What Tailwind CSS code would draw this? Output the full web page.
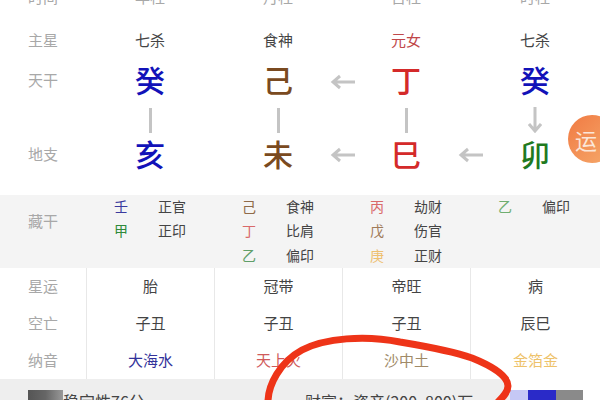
<!DOCTYPE html>
<html lang="zh">
<head>
<meta charset="UTF-8">
<title>排盘</title>
<script src="https://cdn.jsdelivr.net/npm/@tailwindcss/browser@4"></script>
</head>
<body class="bg-white overflow-hidden">
<div class="relative w-[600px] h-[400px] overflow-hidden font-['Noto_Sans_CJK_SC','Noto_Sans',sans-serif] text-[15px] text-[#444]">

  <!-- Header, cut off by the top of the picture -->
  <div class="grid grid-cols-[86px_128px_128px_128px_130px] h-[24px] -mt-[15px] items-center text-center text-[#a8a8a8]">
    <div class="pl-[28px] text-left">时间</div>
    <div>年柱</div>
    <div>月柱</div>
    <div>日柱</div>
    <div>时柱</div>
  </div>

  <!-- Main star -->
  <div class="grid grid-cols-[86px_128px_128px_128px_130px] h-[30px] mt-[16px] items-center text-center">
    <div class="pl-[28px] text-left text-[#a8a8a8]">主星</div>
    <div>七杀</div>
    <div>食神</div>
    <div class="text-[#c0484a]">元女</div>
    <div>七杀</div>
  </div>

  <!-- Heavenly stems -->
  <div class="grid grid-cols-[86px_128px_128px_128px_130px] h-[44px] mt-[2px] items-center text-center text-[30px] leading-none font-medium">
    <div class="pl-[28px] text-left text-[15px] font-normal text-[#a8a8a8]">天干</div>
    <div class="text-[#1212b8]">癸</div>
    <div class="text-[#7a4a20]">己</div>
    <div class="relative text-[#d42a2a]">
      丁
      <svg class="absolute left-[-12px] top-[6px] w-[26px] h-[24px]" viewBox="0 0 26 24" fill="none" stroke="#c4c4c4" stroke-width="3"><path d="M25 12H3M10 6l-7 6 7 6"/></svg>
    </div>
    <div class="text-[#1212b8]">癸</div>
  </div>

  <!-- Links between stems and branches -->
  <div class="grid grid-cols-[86px_128px_128px_128px_130px] h-[26px] mt-[6px] justify-items-center items-center">
    <div></div>
    <div class="w-[3px] h-[25px] bg-[#c4c4c4]"></div>
    <div class="w-[3px] h-[25px] bg-[#c4c4c4]"></div>
    <div class="w-[3px] h-[25px] bg-[#c4c4c4]"></div>
    <svg class="w-[14px] h-[26px]" viewBox="0 0 14 26" fill="none" stroke="#c4c4c4" stroke-width="3"><path d="M7 0v24M1 17l6 7 6-7"/></svg>
  </div>

  <!-- Earthly branches -->
  <div class="grid grid-cols-[86px_128px_128px_128px_130px] h-[44px] -mt-[2px] items-center text-center text-[30px] leading-none font-medium">
    <div class="pl-[28px] text-left text-[15px] font-normal text-[#a8a8a8]">地支</div>
    <div class="text-[#1212b8]">亥</div>
    <div class="text-[#7a4a20]">未</div>
    <div class="relative text-[#d42a2a]">
      巳
      <svg class="absolute left-[-12px] top-[5px] w-[26px] h-[24px]" viewBox="0 0 26 24" fill="none" stroke="#c4c4c4" stroke-width="3"><path d="M25 12H3M10 6l-7 6 7 6"/></svg>
    </div>
    <div class="relative text-[#1f7a1f]">
      卯
      <svg class="absolute left-[-12px] top-[5px] w-[26px] h-[24px]" viewBox="0 0 26 24" fill="none" stroke="#c4c4c4" stroke-width="3"><path d="M25 12H3M10 6l-7 6 7 6"/></svg>
    </div>
  </div>

  <!-- Hidden stems -->
  <div class="grid grid-cols-[86px_128px_128px_128px_130px] h-[73px] mt-[20px] bg-[#f4f4f4] text-[14px]">
    <div class="pl-[28px] pt-[15px] text-[15px] text-[#a8a8a8]">藏干</div>
    <div class="grid grid-cols-[14px_28px] auto-rows-[24.5px] gap-x-[30px] items-center content-start pl-[28px] -mt-[1px] text-center">
      <span class="text-[#3a3a9e]">壬</span><span>正官</span>
      <span class="text-[#2f8a3a]">甲</span><span>正印</span>
    </div>
    <div class="grid grid-cols-[14px_28px] auto-rows-[24.5px] gap-x-[30px] items-center content-start pl-[28px] -mt-[1px] text-center">
      <span class="text-[#8f6a48]">己</span><span>食神</span>
      <span class="text-[#d96a6a]">丁</span><span>比肩</span>
      <span class="text-[#5f9e68]">乙</span><span>偏印</span>
    </div>
    <div class="grid grid-cols-[14px_28px] auto-rows-[24.5px] gap-x-[30px] items-center content-start pl-[28px] -mt-[1px] text-center">
      <span class="text-[#d96a6a]">丙</span><span>劫财</span>
      <span class="text-[#a07a58]">戊</span><span>伤官</span>
      <span class="text-[#eec070]">庚</span><span>正财</span>
    </div>
    <div class="grid grid-cols-[14px_28px] auto-rows-[24.5px] gap-x-[30px] items-center content-start pl-[28px] -mt-[1px] text-center">
      <span class="text-[#6fae70]">乙</span><span>偏印</span>
    </div>
  </div>

  <!-- Fortune, void and nayin -->
  <div class="grid grid-cols-[86px_128px_128px_128px_130px] auto-rows-[37px] h-[111px] items-center text-center">
    <div class="pl-[28px] text-left text-[#a8a8a8] h-full flex items-center">星运</div>
    <div class="h-full flex items-center justify-center border-l border-[#e8e8e8]">胎</div>
    <div class="h-full flex items-center justify-center border-l border-[#e8e8e8]">冠带</div>
    <div class="h-full flex items-center justify-center border-l border-[#e8e8e8]">帝旺</div>
    <div class="h-full flex items-center justify-center border-l border-[#e8e8e8]">病</div>

    <div class="pl-[28px] text-left text-[#a8a8a8] h-full flex items-center">空亡</div>
    <div class="h-full flex items-center justify-center border-l border-[#e8e8e8]">子丑</div>
    <div class="h-full flex items-center justify-center border-l border-[#e8e8e8]">子丑</div>
    <div class="h-full flex items-center justify-center border-l border-[#e8e8e8]">子丑</div>
    <div class="h-full flex items-center justify-center border-l border-[#e8e8e8]">辰巳</div>

    <div class="pl-[28px] text-left text-[#a8a8a8] h-full flex items-center">纳音</div>
    <div class="h-full flex items-center justify-center border-l border-[#e8e8e8] text-[#32329a]">大海水</div>
    <div class="h-full flex items-center justify-center border-l border-[#e8e8e8] text-[#d05a5a]">天上火</div>
    <div class="h-full flex items-center justify-center border-l border-[#e8e8e8] text-[#a08a68]">沙中土</div>
    <div class="h-full flex items-center justify-center border-l border-[#e8e8e8] text-[#eec26a]">金箔金</div>
  </div>

  <!-- Footer, cut off by the bottom of the picture -->
  <div class="flex w-[583px] h-[32px] bg-[#eeeeee] pt-[11px] text-[16px]">
    <div class="w-[35px] h-[21px] ml-[28px] bg-gradient-to-r from-[#555] via-[#666] to-[#999]"></div>
    <div class="w-[242px] leading-[22px]">稳定性76分</div>
    <div class="leading-[22px]">财富：资产(200, 800)万</div>
    <div class="ml-auto flex -mt-[11px] pt-[11px] bg-white">
      <div class="w-[18px] bg-[#c5c8f5]"></div>
      <div class="w-[28px] bg-[#2a2ac8]"></div>
      <div class="w-[27px] bg-[#8a8a8a]"></div>
    </div>
  </div>

  <!-- Floating badge -->
  <div class="absolute left-[568px] top-[115px] w-[48px] h-[48px] rounded-full bg-gradient-to-br from-[#f07a42] to-[#f5aa6c] text-[#fbe6d8] text-[22px] flex items-center pl-[7px]">运</div>

  <!-- Hand-drawn red mark over the screenshot -->
  <svg class="absolute inset-0 w-[600px] h-[400px]" viewBox="0 0 600 400" fill="none" stroke="#ee3418" stroke-width="7" stroke-linecap="round" stroke-linejoin="round">
    <path d="M268 402C268 385 280 362 302 350C325 338 365 335 400 342C430 347 455 352 472 358C492 366 508 376 508 386C508 392 503 397 498 402"/>
  </svg>
</div>
</body>
</html>
